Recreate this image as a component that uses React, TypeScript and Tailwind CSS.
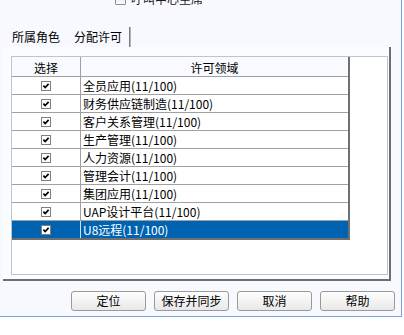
import React from "react";

const rows = [
  "全员应用(11/100)",
  "财务供应链制造(11/100)",
  "客户关系管理(11/100)",
  "生产管理(11/100)",
  "人力资源(11/100)",
  "管理会计(11/100)",
  "集团应用(11/100)",
  "UAP设计平台(11/100)",
  "U8远程(11/100)",
];

const Check = () => (
  <svg width="10" height="10" viewBox="0 0 10 10" className="block">
    <rect x="0.5" y="0.5" width="9" height="9" fill="#fff" stroke="#7f7f7f" />
    <path d="M2.4 4.6 L4.2 6.5 L7.6 2.9" fill="none" stroke="#000" strokeWidth="1.7" />
  </svg>
);

const Btn = ({ label }: { label: string }) => (
  <div className="w-[75px] h-[20px] rounded-[3px] border border-[#9a9a9a] bg-gradient-to-b from-[#fefefe] to-[#e8e8e8] flex items-center justify-center text-[12px] leading-none text-black">
    {label}
  </div>
);

export default function App() {
  return (
    <div className="w-[404px] h-[335px] bg-white overflow-hidden font-['Noto_Sans_CJK_SC',sans-serif] text-black">
      <div className="w-[402px] h-[317px] bg-[#f8f9fe] border-r border-b border-[#7aa2dd] flex flex-col">
        {/* partially visible checkbox */}
        <div className="-mt-[8px] h-[14px] flex items-center pl-[115px] gap-[5px]">
          <div className="w-[11px] h-[11px] border border-[#8f8f8f] rounded-[1px] bg-gradient-to-b from-[#e6e6e6] to-[#fafafa]" />
          <span className="text-[12px] leading-[14px] text-[#1a1a1a]">呼叫中心坐席</span>
        </div>

        {/* tabs */}
        <div className="mt-[21px] h-[20px] flex items-center text-[12px] leading-[16px]">
          <span className="ml-[12px]">所属角色</span>
          <span className="ml-[14px]">分配许可</span>
          <div className="ml-[7px] w-[2px] h-[20px] bg-[#7a7a7a] border-r border-[#b5b5b5]" />
        </div>

        {/* panel */}
        <div className="ml-[3px] w-[388px] h-[234px] bg-[#fbfcff] border-r-2 border-b-2 border-[#6e6e6e] pt-[9px]">
          <div className="ml-[8px] w-[377px] h-[219px] border border-[#bcc4d2] bg-white">
            <div className="w-[338px] border-r-2 border-b-2 border-[#6f6f6f] text-[12px]">
              {/* header */}
              <div className="flex h-[20px] border-b border-[#a0a0a0] bg-[#f8faff]">
                <div className="w-[69px] border-r border-[#a0a0a0] flex items-center justify-center pt-[2px] leading-none">
                  选择
                </div>
                <div className="flex-1 flex items-center justify-center pt-[2px] leading-none">
                  许可领域
                </div>
              </div>
              {rows.map((r, i) => {
                const sel = i === rows.length - 1;
                return (
                  <div
                    key={r}
                    className={
                      sel
                        ? "flex h-[17px] bg-[#0063b1] text-white"
                        : "flex h-[18px] border-b border-[#a0a0a0] bg-white"
                    }
                  >
                    <div
                      className={
                        sel
                          ? "w-[69px] border-r border-[#cfe0f2] flex items-center justify-center"
                          : "w-[69px] border-r border-[#a0a0a0] flex items-center justify-center"
                      }
                    >
                      <Check />
                    </div>
                    <div className="flex-1 flex items-center pl-[2px] pt-[1px] leading-none whitespace-nowrap">
                      {r}
                    </div>
                  </div>
                );
              })}
            </div>
          </div>
        </div>

        {/* buttons */}
        <div className="mt-[10px] flex justify-end gap-[8px] pr-[6px]">
          <Btn label="定位" />
          <Btn label="保存并同步" />
          <Btn label="取消" />
          <Btn label="帮助" />
        </div>
      </div>
    </div>
  );
}
